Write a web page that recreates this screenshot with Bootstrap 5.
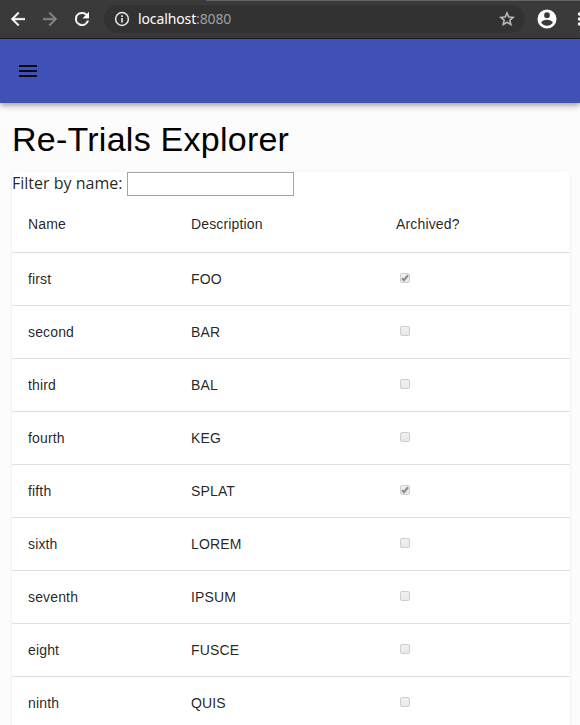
<!DOCTYPE html>
<html lang="en">
<head>
<meta charset="utf-8">
<meta name="viewport" content="width=device-width, initial-scale=1">
<title>Re-Trials Explorer</title>
<link href="https://cdn.jsdelivr.net/npm/bootstrap@5.3.0/dist/css/bootstrap.min.css" rel="stylesheet">
<style>
body{background:#fcfcfc;color:rgba(0,0,0,.87);height:725px;overflow:hidden;font-family:"Open Sans","Noto Sans",sans-serif}
svg{display:block;flex:none}
.browser-bar{height:39px;background:#3a3a3a;border-bottom:1px solid #202020;padding:5px 0 5px 11px;overflow:hidden;background-image:linear-gradient(#646666,#646666);background-size:374px 1px;background-position:right top;background-repeat:no-repeat}
.nav-icons{gap:18px}
.address{width:421px;height:28px;margin-left:15px;padding:0 10px;background:#323232;font-family:"Noto Sans",sans-serif;font-size:14px}
.url-text{color:#fff;margin-left:8px;line-height:28px;letter-spacing:-.12px}
.url-text span{color:#9aa0a6}
.avatar{margin-left:12px}
.app-bar{height:64px;padding:0 16px;background:#3f51b5;box-shadow:0 2px 4px -1px rgba(0,0,0,.2),0 4px 5px rgba(0,0,0,.14),0 1px 10px rgba(0,0,0,.12)}
.page-title{font:400 34px/42px "Liberation Sans",Arial,sans-serif;letter-spacing:.25px;color:#000;margin:15px 0 12px}
.sheet{margin:0 10px 0 12px;height:553px;background:#fff;border-radius:4px 4px 0 0;box-shadow:0 2px 1px -1px rgba(0,0,0,.05),0 1px 1px rgba(0,0,0,.05),0 1px 3px rgba(0,0,0,.1)}
.filter-row{height:24px;font-size:16px;line-height:22px}
.filter-input{width:167px;height:24px;border:1px solid #a6a6a6;background:#fff;margin-left:auto}
.filter-set{width:282px}
.trials{table-layout:fixed;width:558px;border-collapse:separate;border-spacing:0;font:400 14px/20px "Liberation Sans",Arial,sans-serif;letter-spacing:.15px;--bs-table-bg:transparent;--bs-table-color:rgba(0,0,0,.87)}
.trials>:not(caption)>*>*{padding:16px;height:53px;border-bottom:1px solid #e0e0e0;vertical-align:middle;color:rgba(0,0,0,.87)}
.trials>thead>tr>th{height:57px;font-weight:400}
.trials>tbody>tr:last-child>td{height:48px;padding-bottom:12px;border-bottom:0}
.name-col{width:163px}
.desc-col{width:205px}
.arch-col{width:190px}
.tick-box{width:10px;height:10px;margin:-2px 0 0 4px;border:1px solid #cecece;border-radius:2px;background:linear-gradient(#f0f0f0,#e9e9e9)}
.trials>tbody>tr:last-child .tick-box{margin-bottom:1px}
</style>
<script src="https://cdn.jsdelivr.net/npm/bootstrap@5.3.0/dist/js/bootstrap.bundle.min.js"></script>
</head>
<body>
<div class="browser-bar d-flex align-items-center">
  <div class="nav-icons d-flex">
    <svg width="14" height="14" viewBox="4 4 16 16" fill="#fff" stroke="#fff" stroke-width=".4"><path d="M20 11H7.83l5.59-5.59L12 4l-8 8 8 8 1.41-1.41L7.83 13H20v-2z"/></svg>
    <svg width="14" height="14" viewBox="4 4 16 16" fill="#858585" stroke="#858585" stroke-width=".4"><path d="m12 4-1.41 1.41L16.17 11H4v2h12.17l-5.58 5.59L12 20l8-8z"/></svg>
    <svg width="14" height="14" viewBox="4 4 16 16" fill="#fff" stroke="#fff" stroke-width=".4"><path d="M17.65 6.35A8 8 0 1 0 19.73 14h-2.08A6 6 0 1 1 12 6c1.66 0 3.14.69 4.22 1.78L13 11h7V4z"/></svg>
  </div>
  <div class="address rounded-pill d-flex align-items-center">
    <svg width="16" height="16" viewBox="0 0 16 16" fill="none" stroke="#e8e8e8" stroke-width="1.5"><circle cx="8" cy="8" r="6.4"/><path d="M8 7v4.5M8 4.3v1.6" stroke-width="1.7"/></svg>
    <div class="url-text">localhost<span>:8080</span></div>
    <svg class="ms-auto" width="16" height="16" viewBox="1.5 1.5 21 21" fill="#c4c4c4" stroke="#c4c4c4" stroke-width=".4"><path d="m22 9.24-7.19-.62L12 2 9.19 8.63 2 9.24l5.46 4.73L5.82 21 12 17.27 18.18 21l-1.63-7.03zM12 15.4l-3.76 2.27 1-4.28-3.32-2.88 4.38-.38L12 6.1l1.71 4.04 4.38.38-3.32 2.88 1 4.28z"/></svg>
  </div>
  <svg class="avatar" width="20" height="20" viewBox="1.5 1.5 21 21" fill="#fff"><path d="M12 2a10 10 0 1 0 0 20 10 10 0 0 0 0-20zm0 3a3 3 0 1 1 0 6 3 3 0 0 1 0-6zm0 14.2a7.2 7.2 0 0 1-6-3.22c.03-1.99 4-3.08 6-3.08s5.97 1.09 6 3.08a7.2 7.2 0 0 1-6 3.22z"/></svg>
  <svg class="ms-auto" width="3" height="16" viewBox="0 0 3 16" fill="#fff"><circle cx="2.6" cy="3" r="1.8"/><circle cx="2.6" cy="8" r="1.8"/><circle cx="2.6" cy="13" r="1.8"/></svg>
</div>
<header class="app-bar d-flex align-items-center">
  <svg width="24" height="24" viewBox="0 0 24 24" fill="#080a17"><path d="M3 18h18v-2H3v2zm0-5h18v-2H3v2zm0-7v2h18V6H3z"/></svg>
</header>
<main>
  <h1 class="page-title ps-2 ms-1">Re-Trials Explorer</h1>
  <section class="sheet">
    <div class="filter-row filter-set d-flex"><label for="filter">Filter by name:</label><input id="filter" class="filter-input" type="text"></div>
    <table class="table trials mb-0">
      <colgroup><col class="name-col"><col class="desc-col"><col class="arch-col"></colgroup>
      <thead><tr><th>Name</th><th>Description</th><th>Archived?</th></tr></thead>
      <tbody>
        <tr><td>first</td><td>FOO</td><td><div class="tick-box"><svg width="8" height="8" viewBox="0 0 8 8"><path d="M1 4.3 3 6.1 7 1.3" fill="none" stroke="#8e8e8e" stroke-width="2.2"/></svg></div></td></tr>
        <tr><td>second</td><td>BAR</td><td><div class="tick-box"></div></td></tr>
        <tr><td>third</td><td>BAL</td><td><div class="tick-box"></div></td></tr>
        <tr><td>fourth</td><td>KEG</td><td><div class="tick-box"></div></td></tr>
        <tr><td>fifth</td><td>SPLAT</td><td><div class="tick-box"><svg width="8" height="8" viewBox="0 0 8 8"><path d="M1 4.3 3 6.1 7 1.3" fill="none" stroke="#8e8e8e" stroke-width="2.2"/></svg></div></td></tr>
        <tr><td>sixth</td><td>LOREM</td><td><div class="tick-box"></div></td></tr>
        <tr><td>seventh</td><td>IPSUM</td><td><div class="tick-box"></div></td></tr>
        <tr><td>eight</td><td>FUSCE</td><td><div class="tick-box"></div></td></tr>
        <tr><td>ninth</td><td>QUIS</td><td><div class="tick-box"></div></td></tr>
      </tbody>
    </table>
  </section>
</main>
</body>
</html>
